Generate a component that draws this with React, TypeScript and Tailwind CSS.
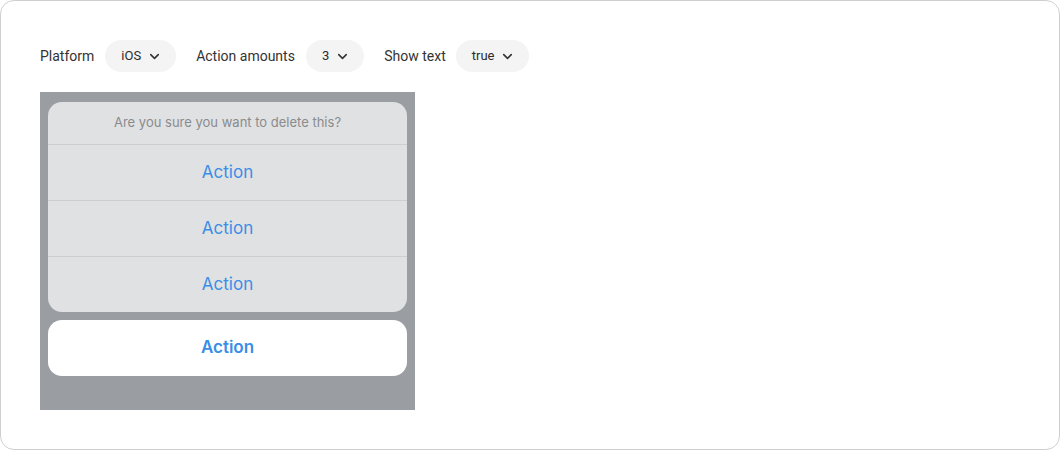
import { ChevronDown } from "lucide-react";

type SelectProps = { value: string };

function PillSelect({ value }: SelectProps) {
  return (
    <div className="flex h-8 items-center gap-[6px] rounded-full bg-[#f4f4f5] pl-4 pr-[14px] text-[13px] text-[#2b2b2b]">
      <span>{value}</span>
      <ChevronDown size={15} strokeWidth={2.5} className="text-[#333]" />
    </div>
  );
}

function ActionRow({ label, bold, h }: { label: string; bold?: boolean; h: string }) {
  return (
    <div
      className={
        "flex items-center justify-center text-[17px] text-[#3a8ee6] " +
        h +
        (bold ? " font-semibold" : "")
      }
    >
      {label}
    </div>
  );
}

export default function App() {
  const actions = ["Action", "Action", "Action"];

  return (
    <div className="h-[450px] w-[1060px] bg-white font-['Roboto',sans-serif]">
      <div className="h-full rounded-[14px] border border-[#cfcfcf] px-[39px] pt-[39px]">
        <div className="flex h-8 items-center text-[14px] text-[#333]">
          <span className="mr-[11px]">Platform</span>
          <PillSelect value="iOS" />
          <span className="ml-5 mr-[11px]">Action amounts</span>
          <PillSelect value="3" />
          <span className="ml-5 mr-[10px]">Show text</span>
          <PillSelect value="true" />
        </div>

        <div className="mt-5 flex h-[318px] w-[375px] flex-col bg-[#9a9ea2] px-2 pt-[10px] font-['Inter',sans-serif]">
          <div className="overflow-hidden rounded-[14px] bg-[#e0e1e2]">
            <div className="flex h-[42px] items-center justify-center text-[13px] text-[#8a8b8e]">
              Are you sure you want to delete this?
            </div>
            {actions.map((a, i) => (
              <div key={i} className="border-t border-[#cdced0]">
                <ActionRow label={a} h="h-[55px]" />
              </div>
            ))}
          </div>
          <div className="mt-2 rounded-[14px] bg-white">
            <ActionRow label="Action" bold h="h-[56px]" />
          </div>
        </div>
      </div>
    </div>
  );
}
